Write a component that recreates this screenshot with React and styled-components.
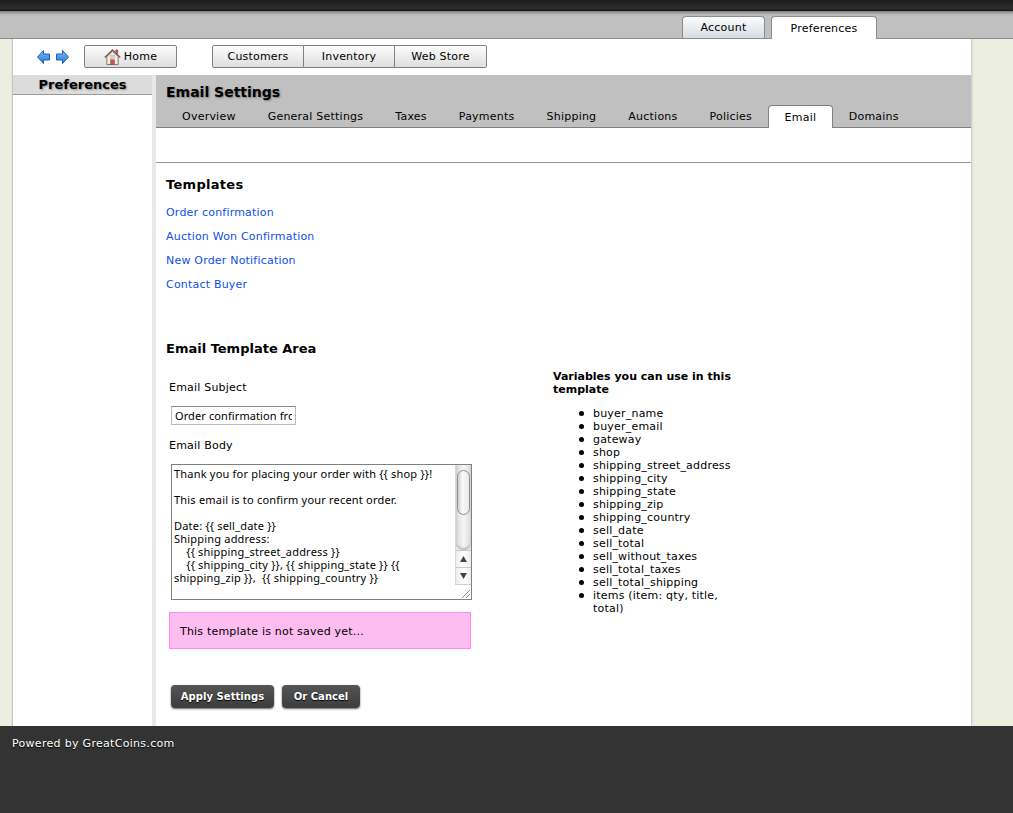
import React from 'react';
import styled, { createGlobalStyle } from 'styled-components';

const GlobalStyle = createGlobalStyle`
  html, body {
    margin: 0;
    padding: 0;
    background: #eceee0;
    font-family: "DejaVu Sans", Verdana, sans-serif;
    font-size: 11px;
    letter-spacing: .2px;
    color: #000;
  }
`;

const Page = styled.div`
  width: 1013px;
  height: 813px;
  display: flex;
  flex-direction: column;
  overflow: hidden;
`;

const TopBar = styled.div`
  height: 11px;
  background: linear-gradient(#1c1c1c, #2e2e2e 80%, #101010);
`;

const TabStrip = styled.div`
  height: 27px;
  display: flex;
  align-items: flex-end;
  gap: 6px;
  padding-left: 682px;
  background: linear-gradient(#7c7c7c, #b4b4b4 3px, #c0c0c0 5px);
  border-bottom: 1px solid #8a8a8a;
  position: relative;
`;

const TopTab = styled.div`
  width: ${p => p.$w}px;
  box-sizing: border-box;
  display: flex;
  align-items: center;
  justify-content: center;
  border: 1px solid #8a8a8a;
  border-bottom: 0;
  border-radius: 4px 4px 0 0;
  background: ${p => (p.$active ? '#fff' : 'linear-gradient(#fbfcfc, #d5dde2)')};
  margin-bottom: ${p => (p.$active ? '-1px' : '0')};
  height: ${p => (p.$active ? '23px' : '22px')};
  position: relative;
`;

const Shell = styled.div`
  flex: 1;
  display: flex;
  flex-direction: column;
  width: 958px;
  margin-left: 13px;
  background: #fff;
  box-shadow: -1px 0 1px #c4c4c4, 1px 0 2px #c4c4c4;
  min-height: 0;
`;

const Toolbar = styled.div`
  height: 36px;
  box-sizing: border-box;
  padding: 0 0 1px 24px;
  display: flex;
  align-items: center;
`;

const ArrowGroup = styled.div`
  display: flex;
  gap: 6px;
  width: 47px;
  margin-top: 1px;
`;

const ToolButton = styled.div`
  height: 23px;
  box-sizing: border-box;
  display: flex;
  align-items: center;
  justify-content: center;
  gap: 3px;
  background: linear-gradient(#fdfdfd, #dedede);
  border: 1px solid #808080;
`;

const HomeButton = styled(ToolButton)`
  width: 93px;
  border-radius: 2px;
  margin-right: 35px;
`;

const SegmentGroup = styled.div`
  display: flex;
`;

const Segment = styled(ToolButton)`
  width: ${p => p.$w}px;
  border-left-width: ${p => (p.$first ? '1px' : '0')};
  border-radius: ${p => (p.$first ? '2px 0 0 2px' : p.$last ? '0 2px 2px 0' : '0')};
`;

const Columns = styled.div`
  flex: 1;
  display: flex;
  min-height: 0;
`;

const Sidebar = styled.aside`
  width: 139px;
  flex: none;
  border-right: 4px solid #e8e8e8;
`;

const SideTitle = styled.h2`
  margin: 0;
  height: 19px;
  line-height: 19px;
  text-align: center;
  font-size: 13px;
  letter-spacing: 0;
  font-weight: bold;
  background: #dcdcdc;
  border-bottom: 1px solid #999;
  text-shadow: 1px 1px 2px #888;
`;

const Main = styled.main`
  flex: 1;
  min-width: 0;
`;

const MainHeader = styled.div`
  height: 53px;
  background: #c0c0c0;
  border-bottom: 1px solid #808080;
  padding-left: 10px;
  box-sizing: border-box;
  display: flex;
  flex-direction: column;
  justify-content: space-between;
`;

const MainTitle = styled.h1`
  margin: 8px 0 0;
  font-size: 14px;
  letter-spacing: 0;
  line-height: 18px;
  font-weight: bold;
  text-shadow: 1px 1px 2px #777;
`;

const SubTabs = styled.div`
  display: flex;
  align-items: flex-end;
  height: 22px;
  margin-bottom: -1px;
  letter-spacing: .23px;
`;

const SubTab = styled.div`
  padding: 0 ${p => (p.$active ? '15.5px' : '16px')};
  display: flex;
  align-items: center;
  padding-bottom: ${p => (p.$active ? '0' : '2px')};
  box-sizing: border-box;
  background: ${p => (p.$active ? '#fff' : 'transparent')};
  border: ${p => (p.$active ? '1px solid #808080' : '0')};
  border-bottom: 0;
  border-radius: ${p => (p.$active ? '4px 4px 0 0' : '0')};
  height: ${p => (p.$active ? '23px' : '22px')};
  flex: none;
`;

const Rule = styled.div`
  margin-top: 34px;
  border-top: 1px solid #999;
`;

const Content = styled.div`
  padding: 0 10px;
`;

const SectionTitle = styled.h3`
  margin: ${p => p.$top}px 0 0;
  font-size: 13px;
  letter-spacing: ${p => p.$spacing || 0}px;
  line-height: 18px;
  font-weight: bold;
`;

const LinkList = styled.div`
  display: flex;
  flex-direction: column;
  gap: 11px;
  margin-top: 12px;
`;

const TemplateLink = styled.a`
  color: #0b50e8;
  line-height: 13px;
  text-decoration: none;
`;

const TwoCols = styled.div`
  display: flex;
  align-items: flex-start;
`;

const FormCol = styled.div`
  width: 387px;
  flex: none;
  padding-left: 3px;
  box-sizing: border-box;
`;

const FieldLabel = styled.div`
  line-height: 13px;
  margin-top: ${p => p.$top}px;
`;

const SubjectInput = styled.input`
  display: block;
  width: 125px;
  height: 19px;
  margin: 12px 0 0 2px;
  padding: 0 3px;
  box-sizing: border-box;
  border: 1px solid #bbb;
  border-top-color: #888;
  background: #fff;
  font: 11px "Noto Sans", Verdana, sans-serif;
  letter-spacing: .1px;
  color: #000;
  outline: none;
`;

const BodyBox = styled.div`
  display: flex;
  width: 301px;
  height: 136px;
  margin: 12px 0 0 2px;
  box-sizing: border-box;
  border: 1px solid #808080;
  position: relative;
`;

const BodyText = styled.textarea`
  flex: 1;
  min-width: 0;
  border: 0;
  outline: none;
  resize: none;
  overflow: hidden;
  padding: 2px 2px;
  margin: 0;
  font: 11px/13px "Noto Sans", Verdana, sans-serif;
  letter-spacing: .2px;
  color: #000;
  white-space: pre-wrap;
`;

const Scrollbar = styled.div`
  width: 15px;
  height: 119px;
  flex: none;
  display: flex;
  flex-direction: column;
  border-left: 1px solid #d8d8d8;
  border-bottom: 1px solid #d0d0d0;
  background: linear-gradient(90deg, #e4e4e4, #fafafa 50%, #e4e4e4);
`;

const ScrollTrack = styled.div`
  flex: 1;
  padding-top: 5px;
  border-radius: 0 0 7px 7px;
  background: linear-gradient(90deg, #d8d8d8, #f6f6f6 50%, #dcdcdc);
  box-shadow: inset 0 -2px 2px #bbb;
`;

const ScrollThumb = styled.div`
  width: 13px;
  height: 45px;
  margin-left: 1px;
  box-sizing: border-box;
  border: 1px solid #8f8f8f;
  border-radius: 7px;
  background: linear-gradient(90deg, #ccc, #fafafa 40%, #e8e8e8);
`;

const ScrollButton = styled.div`
  height: 16px;
  display: flex;
  align-items: center;
  justify-content: center;
  border-top: 1px solid #c8c8c8;
  background: linear-gradient(90deg, #ececec, #fff 50%, #ececec);
`;

const Grip = styled.svg`
  position: absolute;
  right: 0;
  bottom: 0;
`;

const Notice = styled.div`
  width: 302px;
  height: 37px;
  margin-top: 12px;
  box-sizing: border-box;
  padding: 1px 0 0 10px;
  display: flex;
  align-items: center;
  background: #fdbdf0;
  border: 1px solid #fd8cfb;
`;

const ActionRow = styled.div`
  display: flex;
  gap: 8px;
  margin: 36px 0 0 2px;
`;

const ActionButton = styled.div`
  width: ${p => p.$w}px;
  height: 23px;
  display: flex;
  align-items: center;
  justify-content: center;
  border-radius: 4px;
  background: linear-gradient(#555, #3c3c3c);
  box-shadow: 0 1px 2px #666;
  color: #fff;
  font-size: 10px;
  letter-spacing: .05px;
  font-weight: bold;
  text-shadow: 0 1px 1px #000;
`;

const VarsCol = styled.div`
  width: 182px;
  margin-top: 12px;
`;

const VarsTitle = styled.div`
  font-weight: bold;
  letter-spacing: 0;
  line-height: 13px;
`;

const VarsList = styled.ul`
  margin: 11px 0 0;
  padding: 0 0 0 40px;
  line-height: 13px;
  list-style: none;
`;

const VarItem = styled.li`
  position: relative;

  &::before {
    content: "";
    position: absolute;
    left: -14px;
    top: 4px;
    width: 5px;
    height: 5px;
    border-radius: 50%;
    background: #000;
  }
`;

const Footer = styled.footer`
  height: 87px;
  flex: none;
  background: #333;
  color: #fff;
  padding: 11px 0 0 12px;
  box-sizing: border-box;
  line-height: 13px;
  letter-spacing: .3px;
  text-shadow: 0 1px 1px #000;
  position: relative;
`;

const Arrow = ({ flip }) => (
  <svg width="13" height="14" viewBox="0 0 13 14" style={flip ? { transform: 'scaleX(-1)' } : undefined}>
    <defs>
      <linearGradient id={flip ? 'arrR' : 'arrL'} x1="0" y1="0" x2="0" y2="1">
        <stop offset="0" stopColor="#7dbcf3" />
        <stop offset="1" stopColor="#2a78d4" />
      </linearGradient>
    </defs>
    <path d="M.5 7 6.5.5V4h6v6h-6v3.5z" fill={`url(#${flip ? 'arrR' : 'arrL'})`} stroke="#1d5fb0" />
  </svg>
);

const HouseIcon = () => (
  <svg width="17" height="18" viewBox="0 0 18 18">
    <path d="M12.5 1.5h2v4l-2-2z" fill="#b5523f" stroke="#7a4a3a" strokeWidth=".6" />
    <path d="M3 8.5V17h12V8.5L9 3z" fill="#f3efe8" stroke="#8a6f5c" />
    <path d="M.8 9.5 9 1.6l8.2 7.9" fill="none" stroke="#7b5c4a" strokeWidth="1.4" />
    <rect x="7" y="7" width="4" height="3.5" fill="#cfd3d8" stroke="#aaa" strokeWidth=".5" />
    <rect x="7" y="12" width="4" height="5" fill="#c9584a" stroke="#8a3a30" strokeWidth=".5" />
  </svg>
);

const bodyValue = `Thank you for placing your order with {{ shop }}!

This email is to confirm your recent order.

Date: {{ sell_date }}
Shipping address:
    {{ shipping_street_address }}
    {{ shipping_city }}, {{ shipping_state }} {{
shipping_zip }},  {{ shipping_country }}`;

const subTabs = ['Overview', 'General Settings', 'Taxes', 'Payments', 'Shipping', 'Auctions', 'Policies', 'Email', 'Domains'];
const links = ['Order confirmation', 'Auction Won Confirmation', 'New Order Notification', 'Contact Buyer'];
const variables = [
  'buyer_name', 'buyer_email', 'gateway', 'shop', 'shipping_street_address', 'shipping_city',
  'shipping_state', 'shipping_zip', 'shipping_country', 'sell_date', 'sell_total',
  'sell_without_taxes', 'sell_total_taxes', 'sell_total_shipping', 'items (item: qty, title, total)',
];

const App = () => (
  <Page>
    <GlobalStyle />
    <TopBar />
    <TabStrip>
      <TopTab $w={83}>Account</TopTab>
      <TopTab $w={106} $active>Preferences</TopTab>
    </TabStrip>
    <Shell>
      <Toolbar>
        <ArrowGroup>
          <Arrow />
          <Arrow flip />
        </ArrowGroup>
        <HomeButton><HouseIcon />Home</HomeButton>
        <SegmentGroup>
          <Segment $first $w={92}>Customers</Segment>
          <Segment $w={91}>Inventory</Segment>
          <Segment $last $w={92}>Web Store</Segment>
        </SegmentGroup>
      </Toolbar>
      <Columns>
        <Sidebar>
          <SideTitle>Preferences</SideTitle>
        </Sidebar>
        <Main>
          <MainHeader>
            <MainTitle>Email Settings</MainTitle>
            <SubTabs>
              {subTabs.map(t => <SubTab key={t} $active={t === 'Email'}>{t}</SubTab>)}
            </SubTabs>
          </MainHeader>
          <Rule />
          <Content>
            <SectionTitle $top={13} $spacing={0.3}>Templates</SectionTitle>
            <LinkList>
              {links.map(l => <TemplateLink key={l} href="#">{l}</TemplateLink>)}
            </LinkList>
            <SectionTitle $top={49}>Email Template Area</SectionTitle>
            <TwoCols>
              <FormCol>
                <FieldLabel $top={23}>Email Subject</FieldLabel>
                <SubjectInput readOnly value="Order confirmation from" />
                <FieldLabel $top={14}>Email Body</FieldLabel>
                <BodyBox>
                  <BodyText readOnly value={bodyValue} />
                  <Scrollbar>
                    <ScrollTrack><ScrollThumb /></ScrollTrack>
                    <ScrollButton>
                      <svg width="7" height="6" viewBox="0 0 7 6"><path d="M3.5 0 7 6H0z" fill="#444" /></svg>
                    </ScrollButton>
                    <ScrollButton>
                      <svg width="7" height="6" viewBox="0 0 7 6"><path d="M3.5 6 7 0H0z" fill="#444" /></svg>
                    </ScrollButton>
                  </Scrollbar>
                  <Grip width="10" height="10" viewBox="0 0 10 10">
                    <path d="M1 9 9 1M5 9l4-4" stroke="#888" fill="none" />
                  </Grip>
                </BodyBox>
                <Notice>This template is not saved yet...</Notice>
                <ActionRow>
                  <ActionButton $w={103}>Apply Settings</ActionButton>
                  <ActionButton $w={78}>Or Cancel</ActionButton>
                </ActionRow>
              </FormCol>
              <VarsCol>
                <VarsTitle>Variables you can use in this template</VarsTitle>
                <VarsList>
                  {variables.map(v => <VarItem key={v}>{v}</VarItem>)}
                </VarsList>
              </VarsCol>
            </TwoCols>
          </Content>
        </Main>
      </Columns>
    </Shell>
    <Footer>Powered by GreatCoins.com</Footer>
  </Page>
);

export default App;
